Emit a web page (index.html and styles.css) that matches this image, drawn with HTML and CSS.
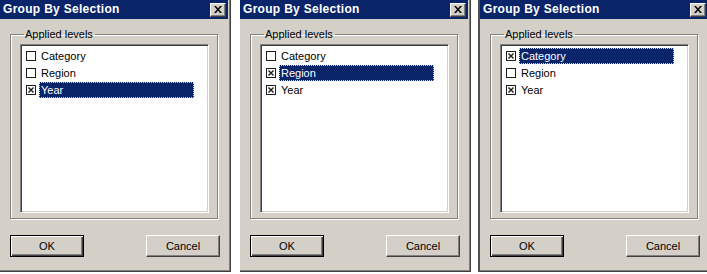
FILE: index.html
```html
<!DOCTYPE html>
<html lang="en">
<head>
  <meta charset="UTF-8">
  <title>Group By Selection</title>
  <link rel="stylesheet" href="styles.css">
</head>
<body>

  <div class="strip">

    <div class="dialog">
      <div class="titlebar">
        <span class="title">Group By Selection</span>
        <button class="close"><svg width="8" height="7" viewBox="0 0 8 7"><path d="M0 0h2l2 2.4 2-2.4h2l-3 3.5 3 3.5h-2l-2-2.4-2 2.4h-2l3-3.5z" fill="#000"/></svg></button>
      </div>
      <fieldset class="group">
        <legend>Applied levels</legend>
        <ul class="list">
          <li><span class="check"></span><span class="label">Category</span></li>
          <li><span class="check"></span><span class="label">Region</span></li>
          <li><span class="check"><svg width="8" height="8" viewBox="0 0 8 8"><path d="M1.5 1.5l5 5M6.5 1.5l-5 5" stroke="#1c1c1c" stroke-width="1.4"/></svg></span><span class="label selected">Year</span></li>
        </ul>
      </fieldset>
      <div class="buttons">
        <button class="btn default">OK</button>
        <button class="btn">Cancel</button>
      </div>
    </div>

    <div class="dialog">
      <div class="titlebar">
        <span class="title">Group By Selection</span>
        <button class="close"><svg width="8" height="7" viewBox="0 0 8 7"><path d="M0 0h2l2 2.4 2-2.4h2l-3 3.5 3 3.5h-2l-2-2.4-2 2.4h-2l3-3.5z" fill="#000"/></svg></button>
      </div>
      <fieldset class="group">
        <legend>Applied levels</legend>
        <ul class="list">
          <li><span class="check"></span><span class="label">Category</span></li>
          <li><span class="check"><svg width="8" height="8" viewBox="0 0 8 8"><path d="M1.5 1.5l5 5M6.5 1.5l-5 5" stroke="#1c1c1c" stroke-width="1.4"/></svg></span><span class="label selected">Region</span></li>
          <li><span class="check"><svg width="8" height="8" viewBox="0 0 8 8"><path d="M1.5 1.5l5 5M6.5 1.5l-5 5" stroke="#1c1c1c" stroke-width="1.4"/></svg></span><span class="label">Year</span></li>
        </ul>
      </fieldset>
      <div class="buttons">
        <button class="btn default">OK</button>
        <button class="btn">Cancel</button>
      </div>
    </div>

    <div class="dialog last">
      <div class="titlebar">
        <span class="title">Group By Selection</span>
        <button class="close"><svg width="8" height="7" viewBox="0 0 8 7"><path d="M0 0h2l2 2.4 2-2.4h2l-3 3.5 3 3.5h-2l-2-2.4-2 2.4h-2l3-3.5z" fill="#000"/></svg></button>
      </div>
      <fieldset class="group">
        <legend>Applied levels</legend>
        <ul class="list">
          <li><span class="check"><svg width="8" height="8" viewBox="0 0 8 8"><path d="M1.5 1.5l5 5M6.5 1.5l-5 5" stroke="#1c1c1c" stroke-width="1.4"/></svg></span><span class="label selected">Category</span></li>
          <li><span class="check"></span><span class="label">Region</span></li>
          <li><span class="check"><svg width="8" height="8" viewBox="0 0 8 8"><path d="M1.5 1.5l5 5M6.5 1.5l-5 5" stroke="#1c1c1c" stroke-width="1.4"/></svg></span><span class="label">Year</span></li>
        </ul>
      </fieldset>
      <div class="buttons">
        <button class="btn default">OK</button>
        <button class="btn">Cancel</button>
      </div>
    </div>

  </div>

</body>
</html>
```

FILE: styles.css
```css
body {
  margin: 0;
  background: #fff;
  font-family: 'Liberation Sans', Arial, sans-serif;
  font-size: 11px;
  color: #000;
}

.strip {
  display: flex;
  gap: 9px;
}

.dialog {
  flex: none;
  width: 230px;
  height: 271px;
  background: #d4d0c8;
  border-right: 1px solid #404040;
  border-bottom: 1px solid #404040;
  box-shadow: inset -1px -1px 0 #808080;
}

.dialog.last {
  box-shadow: inset -1px -1px 0 #808080, -2px 0 0 #505050;
}

.titlebar {
  display: flex;
  align-items: center;
  justify-content: space-between;
  width: 228px;
  height: 19px;
  background: #0a246a;
  color: #fff;
}

.title {
  padding-left: 3px;
  font-weight: bold;
  font-size: 12px;
  letter-spacing: 0.3px;
  line-height: 19px;
}

.close {
  display: flex;
  align-items: center;
  justify-content: center;
  width: 16px;
  height: 14px;
  margin-right: 2px;
  padding: 0;
  background: #d4d0c8;
  border: 1px solid;
  border-color: #fff #404040 #404040 #fff;
  box-shadow: inset -1px -1px 0 #808080;
}

.group {
  width: 208px;
  margin: 9px 0 0 10px;
  padding: 3px 8px 5px 9px;
  border: 1px solid #808080;
  box-shadow: inset 1px 1px 0 #fff, 1px 1px 0 #fff;
  box-sizing: border-box;
  min-inline-size: 0;
}

.group legend {
  margin-left: 4px;
  padding: 0 2px 0 1px;
  line-height: 13px;
}

.list {
  list-style: none;
  margin: 0;
  padding: 2px 0 0;
  width: 189px;
  height: 169px;
  box-sizing: border-box;
  background: #fff;
  border: 1px solid;
  border-color: #808080 #fff #fff #808080;
  box-shadow: inset 1px 1px 0 #404040, inset -1px -1px 0 #d4d0c8;
}

.list li {
  display: flex;
  align-items: center;
  height: 17px;
}

.check {
  display: flex;
  width: 10px;
  height: 10px;
  margin-left: 5px;
  box-sizing: border-box;
  border: 1px solid #1c1c1c;
  background: #fff;
}

.label {
  width: 155px;
  height: 16px;
  margin-left: 3px;
  padding-left: 1px;
  box-sizing: border-box;
  border: 1px solid transparent;
  line-height: 14px;
}

.label.selected {
  background: #0a246a;
  color: #fff;
  border: 1px dotted #d8d8b0;
}

.buttons {
  display: flex;
  justify-content: space-between;
  width: 210px;
  margin: 16px 0 0 10px;
}

.btn {
  width: 74px;
  height: 22px;
  padding: 0;
  font-family: 'Liberation Sans', Arial, sans-serif;
  font-size: 11px;
  color: #000;
  background: #d4d0c8;
  border: 1px solid;
  border-color: #fff #404040 #404040 #fff;
  box-shadow: inset -1px -1px 0 #808080;
}

.btn.default {
  border: 1px solid #000;
  box-shadow: inset 1px 1px 0 #fff, inset -1px -1px 0 #404040, inset -2px -2px 0 #808080;
}
```
